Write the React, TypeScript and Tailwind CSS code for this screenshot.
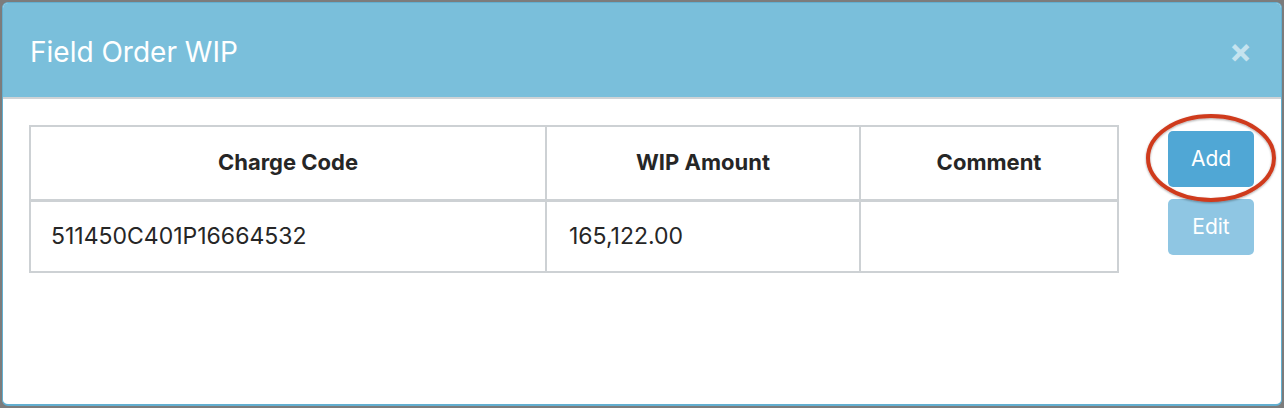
export default function App() {
  return (
    <div className="w-[1284px] h-[408px] bg-[#7c7c7c] pt-[2px] pl-[2px] overflow-hidden" style={{ fontFamily: 'Inter, "Noto Sans", sans-serif' }}>
      <div className="relative w-[1280px] h-[404px] rounded-[6px] border border-[#63afd0] border-b-[2px] bg-white overflow-hidden flex flex-col">
        {/* header */}
        <div className="h-[96px] shrink-0 bg-[#7abfdb] border-b-[2px] border-[#cfd3d6] flex items-center justify-between pl-[27px] pr-[29px]">
          <h4 className="text-[28px] text-white leading-none pt-[4px]">Field Order WIP</h4>
          <span className="text-[34px] font-bold text-[#c5e3ef] leading-none pt-[2px]">×</span>
        </div>

        {/* body */}
        <div className="flex px-[26px] pt-[26px]">
          <table className="w-[1090px] border-collapse text-[23px] text-[#262626]">
            <thead>
              <tr className="h-[74px] text-[22px]">
                <th className="w-[516px] border-2 border-[#cdd1d4] border-b-[3px] font-bold">Charge Code</th>
                <th className="w-[314px] border-2 border-[#cdd1d4] border-b-[3px] font-bold">WIP Amount</th>
                <th className="border-2 border-[#cdd1d4] border-b-[3px] font-bold">Comment</th>
              </tr>
            </thead>
            <tbody>
              <tr className="h-[72px]">
                <td className="border-2 border-[#cdd1d4] pl-[20px]">511450C401P16664532</td>
                <td className="border-2 border-[#cdd1d4] pl-[22px]">165,122.00</td>
                <td className="border-2 border-[#cdd1d4]"></td>
              </tr>
            </tbody>
          </table>

          <div className="ml-[49px] mt-[6px] flex flex-col gap-[12px]">
            <button className="w-[86px] h-[56px] rounded-[5px] bg-[#50a7d5] text-white text-[21px]">Add</button>
            <button className="w-[86px] h-[56px] rounded-[5px] bg-[#8fc6e3] text-white text-[21px]">Edit</button>
          </div>
        </div>

        {/* red annotation ring */}
        <svg className="absolute left-[1140px] top-[106px]" width="140" height="100" viewBox="0 0 140 100">
          <defs>
            <filter id="sh" x="-20%" y="-20%" width="140%" height="140%">
              <feDropShadow dx="0" dy="1" stdDeviation="1.2" floodColor="#000" floodOpacity="0.35" />
            </filter>
          </defs>
          <ellipse cx="68" cy="49" rx="63" ry="42" fill="none" stroke="#cf3a1f" strokeWidth="4" filter="url(#sh)" />
        </svg>
      </div>
    </div>
  );
}
